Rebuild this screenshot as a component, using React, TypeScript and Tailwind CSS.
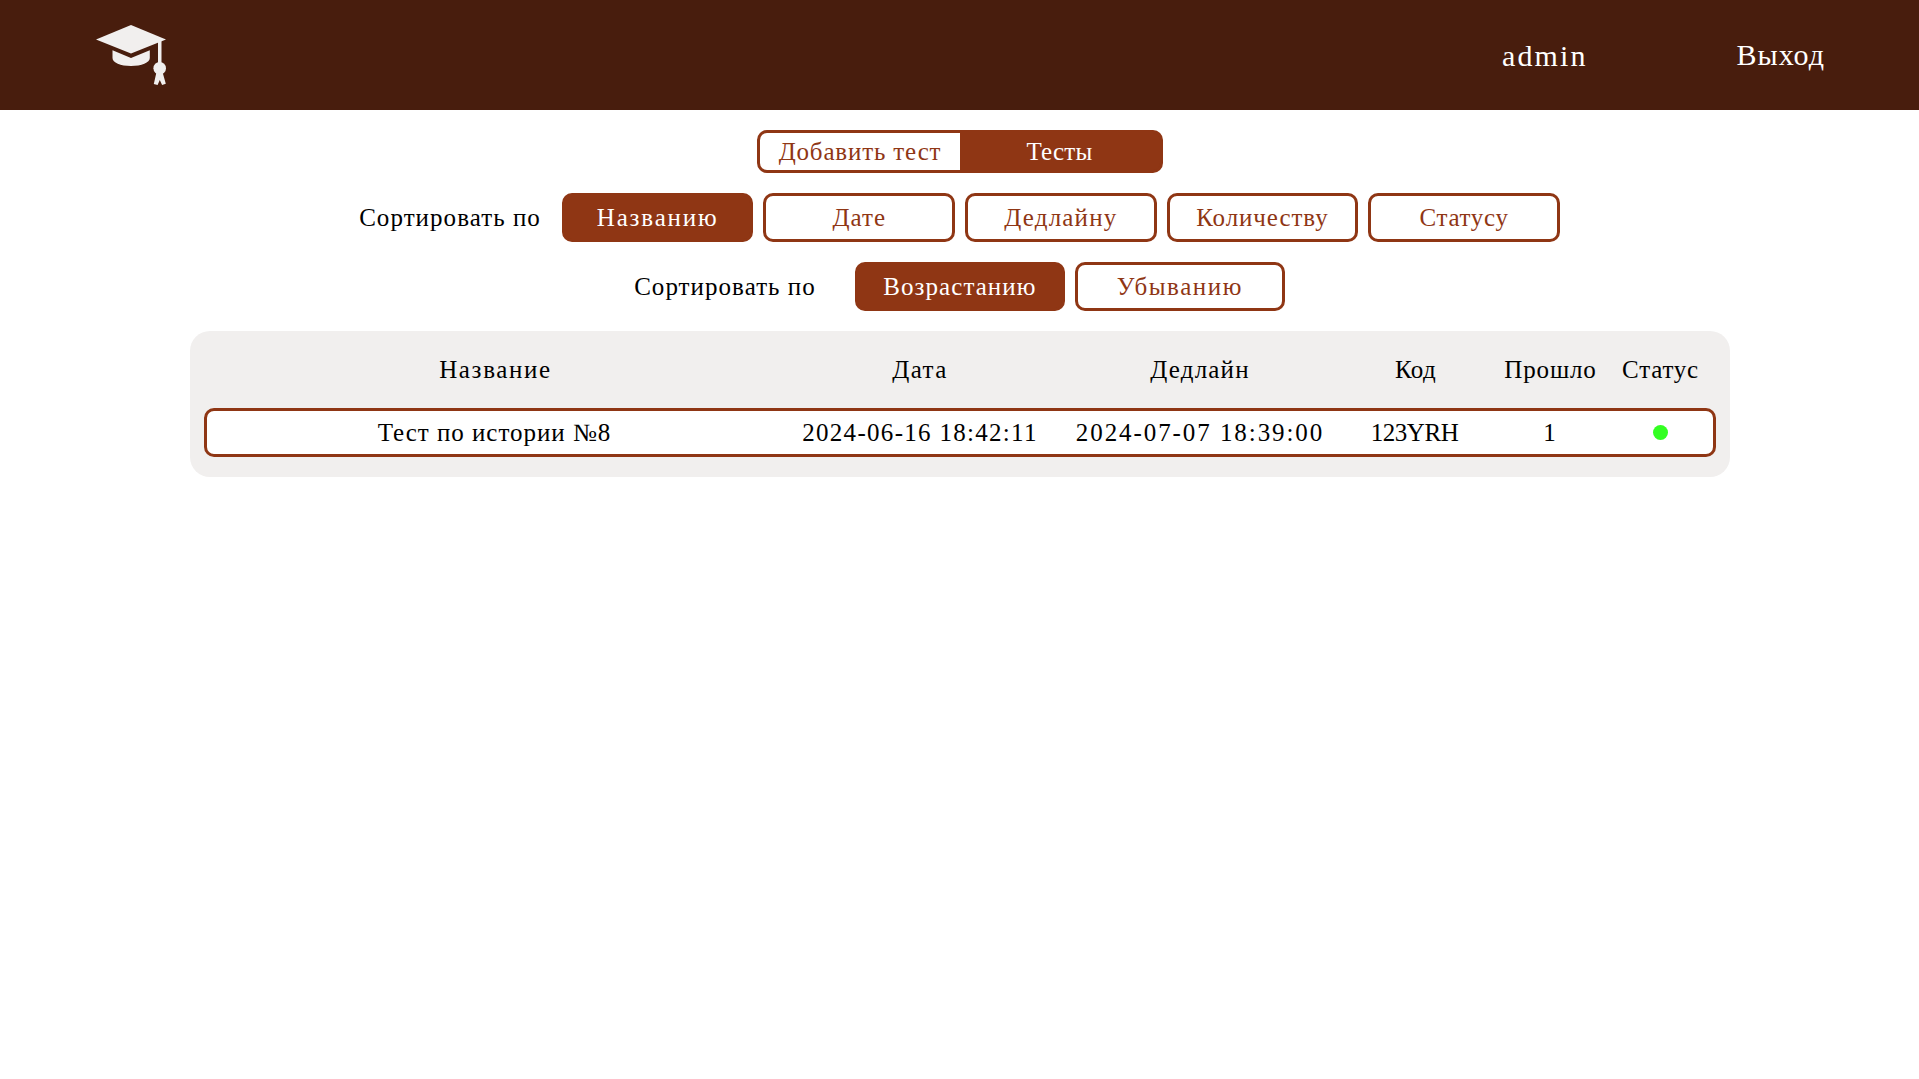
import type { ReactNode } from 'react';

function Logo() {
  return (
    <svg width="70" height="62" viewBox="0 0 70 62" fill="#f1efee" aria-label="Логотип">
      <path d="M0 14.5 35 0 70 14.5 35 28.5Z" />
      <path d="M16.5 25.2 35 33 53.8 25.2V33C53.8 37.5 45.5 41 35 41S16.5 37.5 16.5 33Z" />
      <path d="M62 15H65.5V40H62Z" />
      <circle cx="63.7" cy="43.3" r="6.3" />
      <path d="M60.5 47 57.8 59 61.6 60 63.8 55 66.1 60 69.8 58.8 66.5 47Z" />
    </svg>
  );
}

function SortButton({ active = false, className, children }: { active?: boolean; className: string; children: ReactNode }) {
  return (
    <button
      className={`h-[49px] shrink-0 rounded-[10px] border-3 border-[#8f3614] text-center leading-[42px] ${
        active ? 'bg-[#8f3614] text-white' : 'bg-white text-[#8f3614]'
      } ${className}`}
    >
      {children}
    </button>
  );
}

const columns = 'grid grid-cols-[576px_273px_287px_144px_126px_94px] text-center';

export default function App() {
  return (
    <div className="flex min-h-screen flex-col bg-white font-['Liberation_Serif',serif] text-[25px] leading-[43px] text-black">
      <header className="flex h-[110px] items-start justify-between bg-[#481d0d] pr-[94px] pl-24 text-[30px] text-white">
        <div className="pt-[25px]">
          <Logo />
        </div>
        <nav className="flex gap-[149px]">
          <a className="pt-[34px] tracking-[2.1px]">admin</a>
          <a className="pt-[33px] tracking-[1px]">Выход</a>
        </nav>
      </header>

      <main className="flex flex-col items-center gap-5 pt-5">
        <div className="flex h-[43px] w-[406px] rounded-[10px] border-3 border-[#8f3614] bg-[#8f3614] leading-[37px]">
          <button className="w-[200px] rounded-l-[7px] bg-white pl-px tracking-[0.84px] text-[#8f3614]">Добавить тест</button>
          <button className="w-[200px] tracking-[0.24px] text-white">Тесты</button>
        </div>

        <div className="flex items-center gap-2.5">
          <span className="mr-[11px] -mt-px tracking-[1.05px]">Сортировать по</span>
          <SortButton active className="w-[191.6px] tracking-[1.85px]">Названию</SortButton>
          <SortButton className="w-[191.6px] tracking-[1.02px]">Дате</SortButton>
          <SortButton className="w-[191.6px] tracking-[1.19px]">Дедлайну</SortButton>
          <SortButton className="w-[191.6px] tracking-[0.92px]">Количеству</SortButton>
          <SortButton className="w-[191.6px] tracking-[0.69px]">Статусу</SortButton>
        </div>

        <div className="flex items-center gap-2.5">
          <span className="mr-[29px] -mt-px tracking-[1.05px]">Сортировать по</span>
          <SortButton active className="w-[210px] tracking-[1.07px]">Возрастанию</SortButton>
          <SortButton className="w-[210px] tracking-[1.58px]">Убыванию</SortButton>
        </div>

        <section className="h-[146px] w-[1540px] rounded-[20px] bg-[#f1efee] px-3.5">
          <div className={`${columns} h-[77px] pt-[17px] pl-1`}>
            <span className="tracking-[1.66px]">Название</span>
            <span className="tracking-[1.42px]">Дата</span>
            <span className="tracking-[1.2px]">Дедлайн</span>
            <span className="tracking-[0.4px]">Код</span>
            <span className="tracking-[0.84px]">Прошло</span>
            <span className="tracking-[0.78px]">Статус</span>
          </div>
          <div className={`${columns} h-[49px] rounded-[10px] border-3 border-[#8f3614] bg-white`}>
            <span className="tracking-[0.98px]">Тест по истории №8</span>
            <span className="pl-0.5 tracking-[1.3px]">2024-06-16 18:42:11</span>
            <span className="pl-0.5 tracking-[1.93px]">2024-07-07 18:39:00</span>
            <span className="tracking-[-0.45px]">123YRH</span>
            <span>1</span>
            <span className="flex items-center justify-center pl-px">
              <span className="size-[15px] rounded-full bg-[#33ff22]" />
            </span>
          </div>
        </section>
      </main>
    </div>
  );
}
